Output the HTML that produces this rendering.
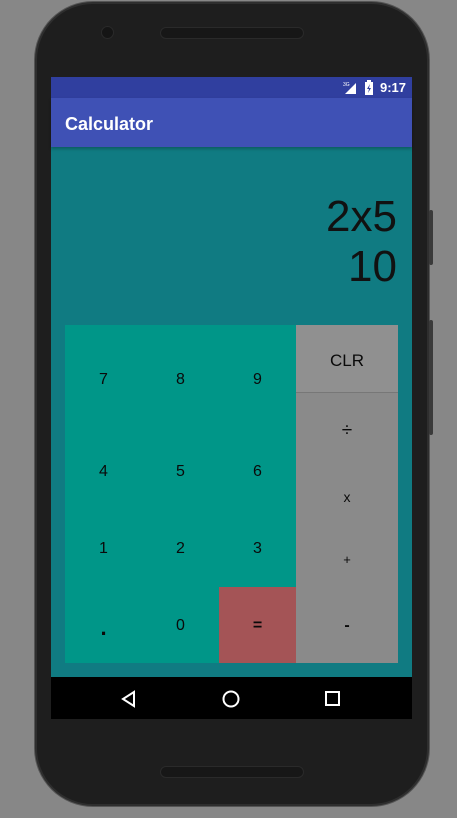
<!DOCTYPE html>
<html><head><meta charset="utf-8"><style>
*{margin:0;padding:0;box-sizing:border-box}
body{width:457px;height:818px;background:#878787;position:relative;overflow:hidden;font-family:"Liberation Sans",sans-serif}
.phone{position:absolute;left:35px;top:2px;width:394px;height:804px;background:#1e1e1e;border-radius:58px;border:2px solid #2e2e2e;box-shadow:0 0 0 1px #555}
.spk{position:absolute;left:160px;width:144px;height:12px;border-radius:6px;background:#171717;border:1px solid #2a2a2a}
.cam{position:absolute;left:101px;top:26px;width:13px;height:13px;border-radius:50%;background:#151515;border:1px solid #2a2a2a}
.side{position:absolute;left:429px;width:4px;background:#3a3a3a;border-radius:2px}
.screen{position:absolute;left:51px;top:77px;width:361px;height:642px;background:#107b82}
.status{position:absolute;left:0;top:0;width:361px;height:21px;background:#303f9f;color:#fff;font-size:13px}
.app{position:absolute;left:0;top:21px;width:361px;height:49px;background:#3f51b5;color:#fff;font-size:18px;font-weight:600;padding:16px 0 0 14px;box-shadow:0 2px 3px rgba(0,0,0,.25)}
.disp{position:absolute;right:15px;color:#111;font-size:44px;text-align:right}
.k{position:absolute;color:#0a0a0a;font-size:16px;text-align:center;width:77px}
.nav{position:absolute;left:0;top:600px;width:361px;height:42px;background:#000}
</style></head><body>
<div class="phone"></div>
<div class="spk" style="top:27px"></div>
<div class="spk" style="top:766px"></div>
<div class="cam"></div>
<div class="side" style="top:210px;height:55px"></div>
<div class="side" style="top:320px;height:115px"></div>
<div class="screen">
 <div class="status">
  <svg style="position:absolute;left:292px;top:4px" width="14" height="13"><text x="0" y="5" font-size="5" fill="#fff" font-family="Liberation Sans">3G</text><polygon points="2,13 13,13 13,2" fill="#fff"/></svg>
  <svg style="position:absolute;left:314px;top:3px" width="9" height="15"><rect x="0" y="2" width="8" height="13" fill="#fff"/><rect x="2" y="0" width="4" height="2" fill="#fff"/><polygon points="5,4 2,9 4,9 3,13 6,8 4,8" fill="#303f9f"/></svg>
  <span style="position:absolute;left:329px;top:3px;font-weight:bold">9:17</span>
 </div>
 <div class="app">Calculator</div>
 <div class="disp" style="top:115px">2x5</div>
 <div class="disp" style="top:165px">10</div>
 <div style="position:absolute;left:14px;top:248px;width:231px;height:338px;background:#009688"></div>
 <div style="position:absolute;left:168px;top:510px;width:77px;height:76px;background:#a45456"></div>
 <div style="position:absolute;left:245px;top:248px;width:102px;height:338px;background:#8a8a8a"></div>
 <div style="position:absolute;left:245px;top:248px;width:102px;height:68px;background:#909090;border-bottom:1px solid #777"></div>
 <div class="k" style="left:14px;top:294px">7</div><div class="k" style="left:91px;top:294px">8</div><div class="k" style="left:168px;top:294px">9</div>
 <div class="k" style="left:14px;top:386px">4</div><div class="k" style="left:91px;top:386px">5</div><div class="k" style="left:168px;top:386px">6</div>
 <div class="k" style="left:14px;top:463px">1</div><div class="k" style="left:91px;top:463px">2</div><div class="k" style="left:168px;top:463px">3</div>
 <div class="k" style="left:14px;top:538px;font-size:22px;font-weight:bold">.</div><div class="k" style="left:91px;top:540px">0</div><div class="k" style="left:168px;top:540px;font-weight:bold">=</div>
 <div class="k" style="left:245px;width:102px;top:274px;font-size:17px">CLR</div>
 <div class="k" style="left:245px;width:102px;top:343px;font-size:19px">÷</div>
 <div class="k" style="left:245px;width:102px;top:412px;font-size:14px">x</div>
 <div class="k" style="left:245px;width:102px;top:475px;font-size:13px">+</div>
 <div class="k" style="left:245px;width:102px;top:540px;font-weight:bold">-</div>
 <div class="nav">
  <svg width="361" height="42"><polygon points="72,22 83,15 83,29" fill="none" stroke="#fff" stroke-width="2"/><circle cx="180" cy="22" r="7.5" fill="none" stroke="#fff" stroke-width="2"/><rect x="275" y="15" width="13" height="13" fill="none" stroke="#fff" stroke-width="2"/></svg>
 </div>
</div>
</body></html>
